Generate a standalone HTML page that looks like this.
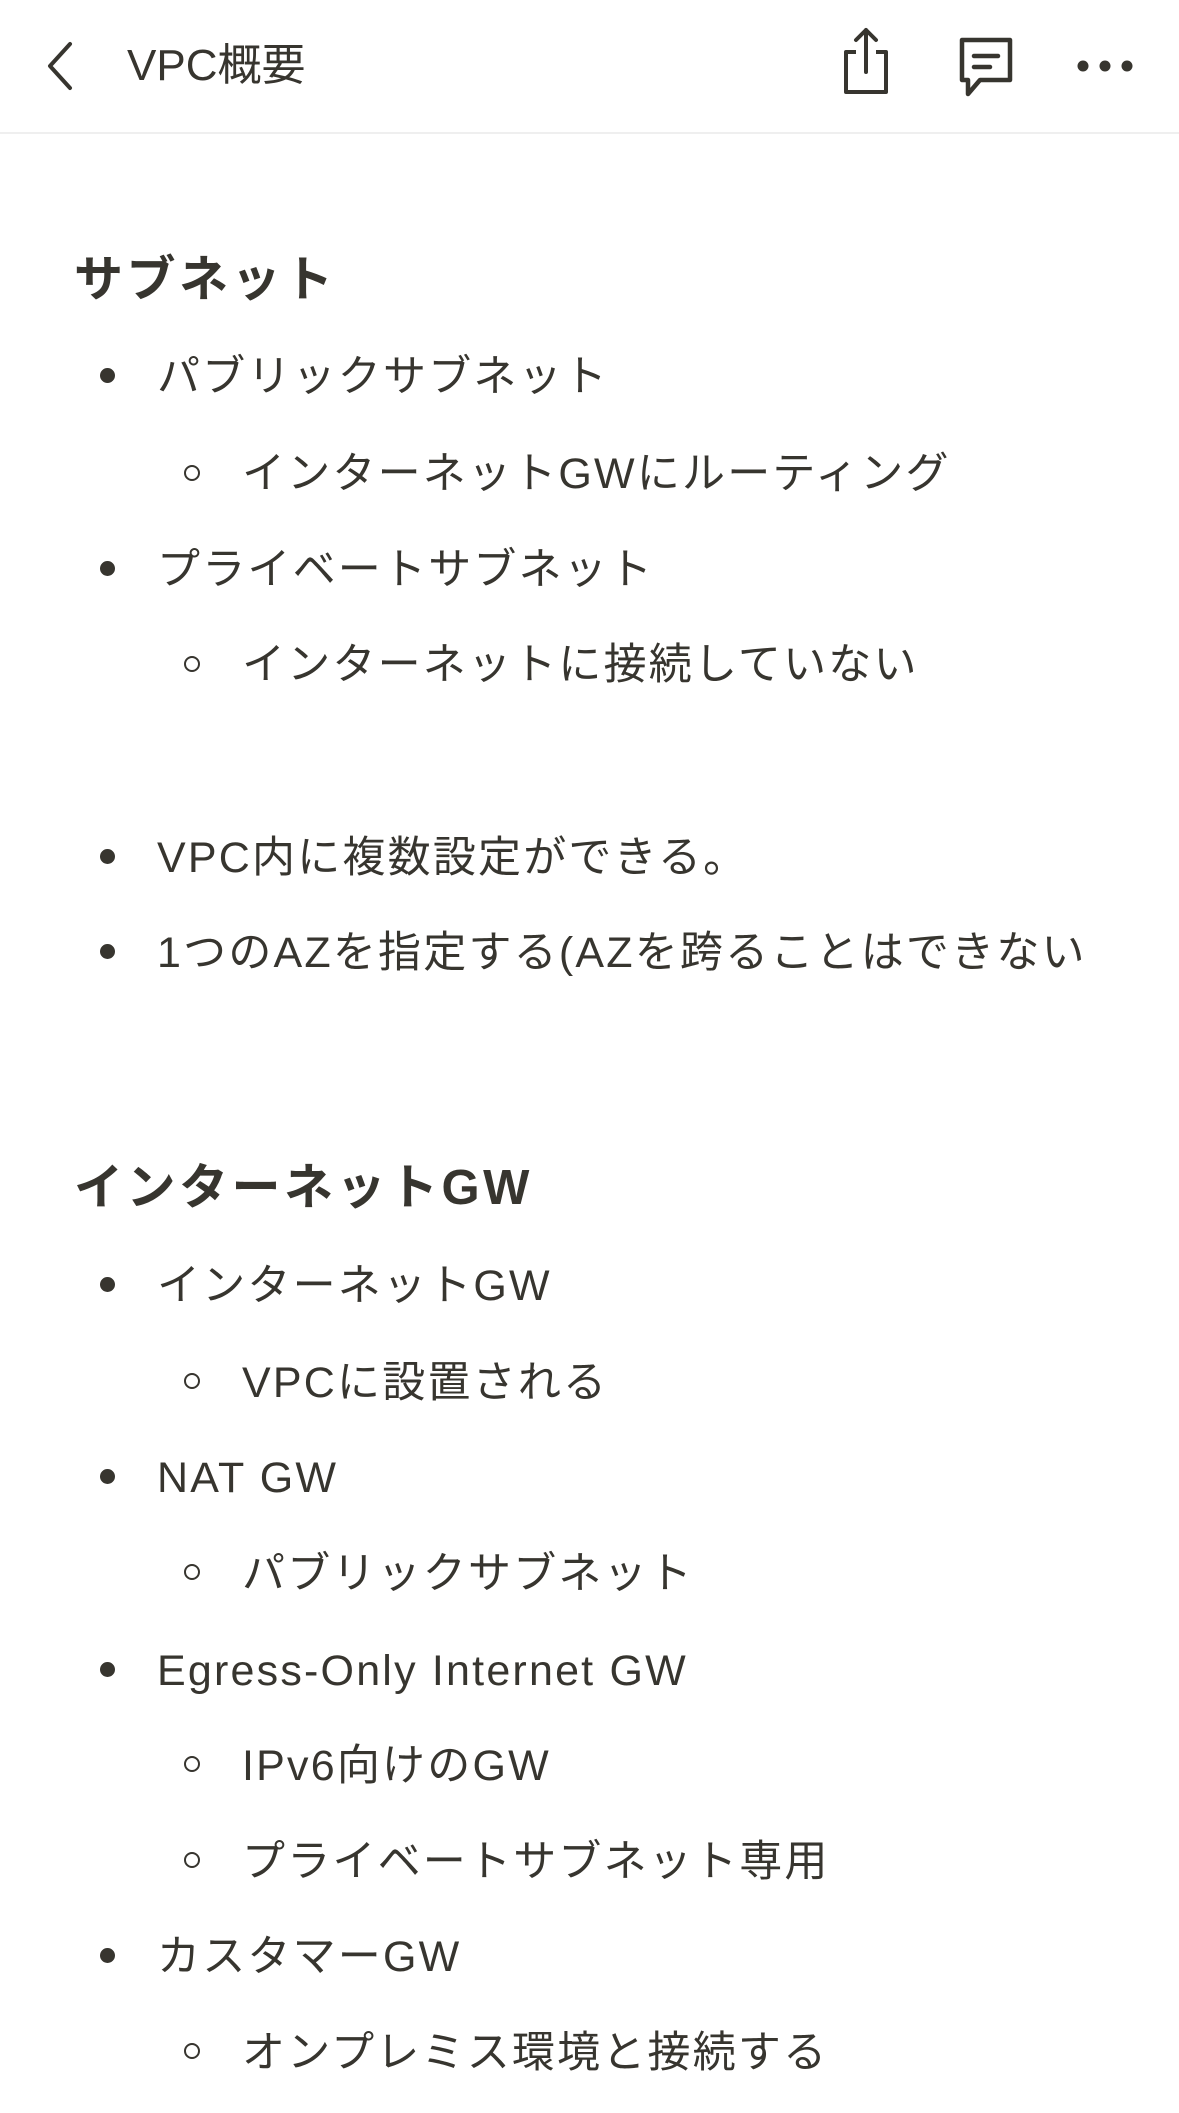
<!DOCTYPE html>
<html><head><meta charset="utf-8"><style>
html,body{margin:0;padding:0;background:#fff;}
body{width:1179px;height:2113px;position:relative;overflow:hidden;font-family:"Liberation Sans","Noto Sans CJK JP",sans-serif;color:#37352f;}
.hdr{position:absolute;left:0;top:0;width:1179px;height:132px;border-bottom:2px solid #efefef;}
.t{position:absolute;white-space:nowrap;font-size:43px;letter-spacing:2.2px;line-height:60px;}
.h{position:absolute;white-space:nowrap;font-size:49px;font-weight:bold;letter-spacing:3.5px;line-height:60px;}
.d{position:absolute;width:15px;height:15px;border-radius:50%;background:#37352f;}
.c{position:absolute;width:12px;height:12px;border-radius:50%;border:2.5px solid #37352f;}
</style></head><body>
<div class="hdr">
<svg style="position:absolute;left:40px;top:40px" width="36" height="52" viewBox="0 0 36 52"><path d="M30 4 L10 26 L30 48" fill="none" stroke="#37352f" stroke-width="4" stroke-linecap="round" stroke-linejoin="round"/></svg>
<div class="t" style="left:127px;top:36px;font-size:44px;letter-spacing:0">VPC概要</div>
<svg style="position:absolute;left:838px;top:26px" width="56" height="70" viewBox="0 0 56 70"><path d="M18 26 H8 V66 H48 V26 H38" fill="none" stroke="#37352f" stroke-width="4" stroke-linejoin="round"/><path d="M28 46 V4 M18 14 L28 4 L38 14" fill="none" stroke="#37352f" stroke-width="4" stroke-linecap="round" stroke-linejoin="round"/></svg>
<svg style="position:absolute;left:954px;top:36px" width="64" height="64" viewBox="0 0 64 64"><path d="M8 4 H56 V44 H26 L14 58 V44 H8 Z" fill="none" stroke="#37352f" stroke-width="4.5" stroke-linejoin="round"/><path d="M20 20 H44 M20 31 H36" stroke="#37352f" stroke-width="4.5" stroke-linecap="round"/></svg>
<svg style="position:absolute;left:1075px;top:56px" width="60" height="20" viewBox="0 0 60 20"><circle cx="8" cy="10" r="5.5" fill="#37352f"/><circle cx="30" cy="10" r="5.5" fill="#37352f"/><circle cx="52" cy="10" r="5.5" fill="#37352f"/></svg>
</div>

<div class="h" style="left:74px;top:250px">サブネット</div>
<div class="d" style="left:100px;top:368px"></div><div class="t" style="left:157px;top:347px">パブリックサブネット</div>
<div class="c" style="left:184px;top:465px"></div><div class="t" style="left:242px;top:444px">インターネットGWにルーティング</div>
<div class="d" style="left:100px;top:561px"></div><div class="t" style="left:157px;top:540px">プライベートサブネット</div>
<div class="c" style="left:184px;top:656px"></div><div class="t" style="left:242px;top:635px">インターネットに接続していない</div>
<div class="d" style="left:100px;top:849px"></div><div class="t" style="left:157px;top:828px">VPC内に複数設定ができる。</div>
<div class="d" style="left:100px;top:944px"></div><div class="t" style="left:157px;top:923px">1つのAZを指定する(AZを跨ることはできない</div>

<div class="h" style="left:74px;top:1158px">インターネットGW</div>
<div class="d" style="left:100px;top:1277px"></div><div class="t" style="left:157px;top:1256px">インターネットGW</div>
<div class="c" style="left:184px;top:1373px"></div><div class="t" style="left:242px;top:1353px">VPCに設置される</div>
<div class="d" style="left:100px;top:1469px"></div><div class="t" style="left:157px;top:1448px">NAT GW</div>
<div class="c" style="left:184px;top:1564px"></div><div class="t" style="left:242px;top:1544px">パブリックサブネット</div>
<div class="d" style="left:100px;top:1662px"></div><div class="t" style="left:157px;top:1641px">Egress-Only Internet GW</div>
<div class="c" style="left:184px;top:1756px"></div><div class="t" style="left:242px;top:1736px">IPv6向けのGW</div>
<div class="c" style="left:184px;top:1852px"></div><div class="t" style="left:242px;top:1832px">プライベートサブネット専用</div>
<div class="d" style="left:100px;top:1948px"></div><div class="t" style="left:157px;top:1927px">カスタマーGW</div>
<div class="c" style="left:184px;top:2043px"></div><div class="t" style="left:242px;top:2023px">オンプレミス環境と接続する</div>
</body></html>
